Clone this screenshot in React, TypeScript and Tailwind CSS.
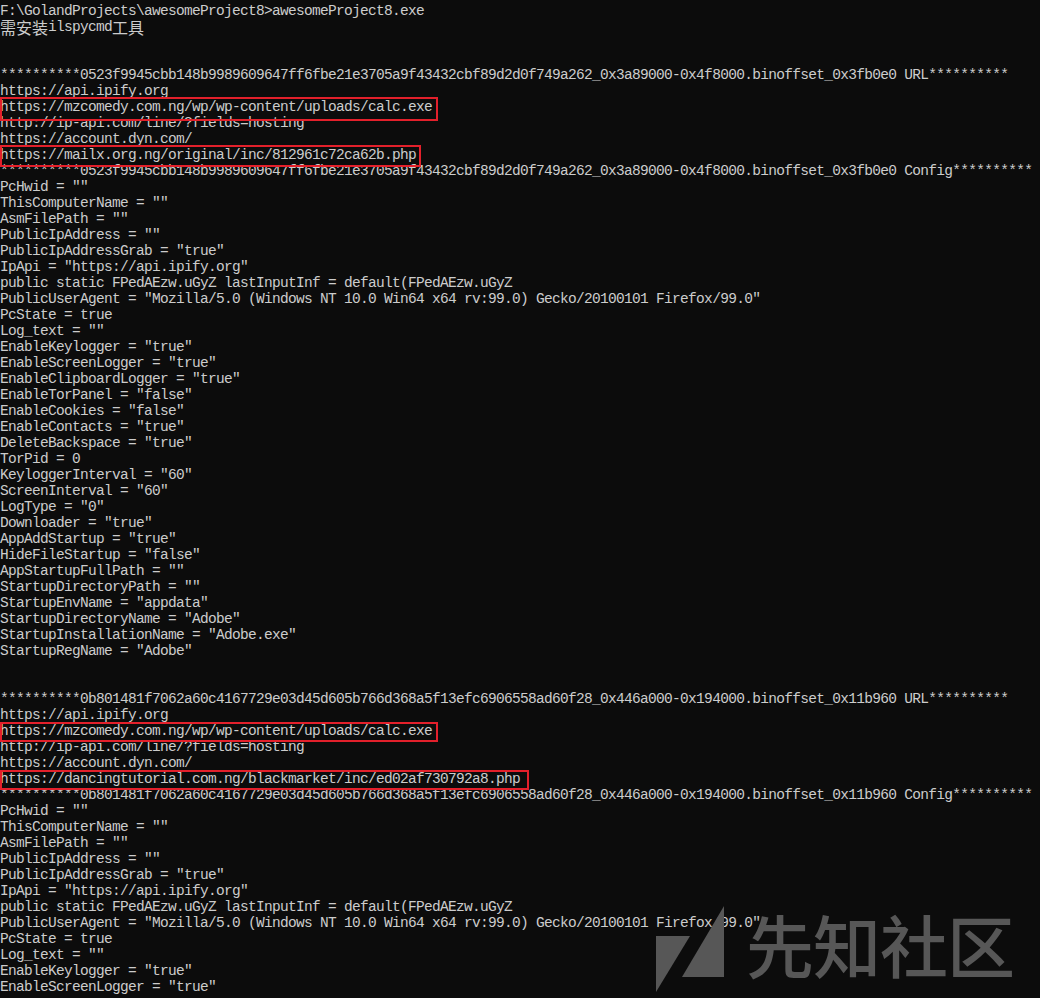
const STARS = "*".repeat(10);
const URL_A = STARS + "0523f9945cbb148b9989609647ff6fbe21e3705a9f43432cbf89d2d0f749a262_0x3a89000-0x4f8000.binoffset_0x3fb0e0";
const URL_B = STARS + "0b801481f7062a60c4167729e03d45d605b766d368a5f13efc6906558ad60f28_0x446a000-0x194000.binoffset_0x11b960";

const configHead = [
  'PcHwid = ""',
  'ThisComputerName = ""',
  'AsmFilePath = ""',
  'PublicIpAddress = ""',
  'PublicIpAddressGrab = "true"',
  'IpApi = "https://api.ipify.org"',
  "public static FPedAEzw.uGyZ lastInputInf = default(FPedAEzw.uGyZ",
  'PublicUserAgent = "Mozilla/5.0 (Windows NT 10.0 Win64 x64 rv:99.0) Gecko/20100101 Firefox/99.0"',
  "PcState = true",
  'Log_text = ""',
  'EnableKeylogger = "true"',
  'EnableScreenLogger = "true"',
];

const configTail = [
  'EnableClipboardLogger = "true"',
  'EnableTorPanel = "false"',
  'EnableCookies = "false"',
  'EnableContacts = "true"',
  'DeleteBackspace = "true"',
  "TorPid = 0",
  'KeyloggerInterval = "60"',
  'ScreenInterval = "60"',
  'LogType = "0"',
  'Downloader = "true"',
  'AppAddStartup = "true"',
  'HideFileStartup = "false"',
  'AppStartupFullPath = ""',
  'StartupDirectoryPath = ""',
  'StartupEnvName = "appdata"',
  'StartupDirectoryName = "Adobe"',
  'StartupInstallationName = "Adobe.exe"',
  'StartupRegName = "Adobe"',
];

const Line = ({ children }: { children?: React.ReactNode }) => (
  <div className="h-4 leading-4 whitespace-pre">{children ?? " "}</div>
);

// red annotation box around a line
const Boxed = ({ text, box }: { text: string; box: string }) => (
  <div className="relative h-4 leading-4 whitespace-pre">
    {text}
    <div className={`absolute left-0 border-2 border-[#e3202b] ${box}`}></div>
  </div>
);

const Block = ({ head, urls, boxes, last }: { head: string; urls: string; boxes: [string, string]; last: boolean }) => (
  <>
    <Line>{head + " URL" + STARS}</Line>
    <Line>https://api.ipify.org</Line>
    <Boxed text="https://mzcomedy.com.ng/wp/wp-content/uploads/calc.exe" box={boxes[0]} />
    <Line>http://ip-api.com/line/?fields=hosting</Line>
    <Line>https://account.dyn.com/</Line>
    <Boxed text={urls} box={boxes[1]} />
    <Line>{head + " Config" + STARS}</Line>
    {configHead.map((l) => (
      <Line key={l}>{l}</Line>
    ))}
    {!last && configTail.map((l) => <Line key={l}>{l}</Line>)}
  </>
);

const Watermark = () => (
  <div className="absolute left-[654px] top-[904px] flex items-start gap-[20px] text-[#575757]">
    <svg width="72" height="90" viewBox="0 0 72 90" className="mt-[2px]">
      <polygon points="2,30 36,30 2,86" fill="#575757" />
      <polygon points="70,0 70,71 28,71" fill="#575757" />
    </svg>
    <div className="mt-[2px] text-[68px] leading-[76px] font-medium tracking-[-1px] [font-family:'Noto_Sans_CJK_SC',sans-serif]">
      先知社区
    </div>
  </div>
);

export default function App() {
  return (
    <div className="relative h-[998px] w-full overflow-hidden bg-[#0c0c0c] pt-[3px] text-[#cccccc] text-[14.5px] tracking-[-0.7px] [font-family:'Liberation_Mono',monospace]">
      <Line>F:\GolandProjects\awesomeProject8&gt;awesomeProject8.exe</Line>
      <Line>
        <span className="inline-block h-4 leading-4 text-[16px] tracking-normal align-top [font-family:'Noto_Sans_CJK_SC',sans-serif]">需安装</span>
        ilspycmd
        <span className="inline-block h-4 leading-4 text-[16px] tracking-normal align-top [font-family:'Noto_Sans_CJK_SC',sans-serif]">工具</span>
      </Line>
      <Line />
      <Line />
      <Block
        head={URL_A}
        urls="https://mailx.org.ng/original/inc/812961c72ca62b.php"
        boxes={["-top-[2px] h-[24px] w-[438px]", "-top-[2px] h-[22px] w-[421px]"]}
        last={false}
      />
      <Line />
      <Line />
      <Block
        head={URL_B}
        urls="https://dancingtutorial.com.ng/blackmarket/inc/ed02af730792a8.php"
        boxes={["-top-[1px] h-[20px] w-[438px]", "-top-[1px] h-[20px] w-[529px]"]}
        last={true}
      />
      <Watermark />
    </div>
  );
}
